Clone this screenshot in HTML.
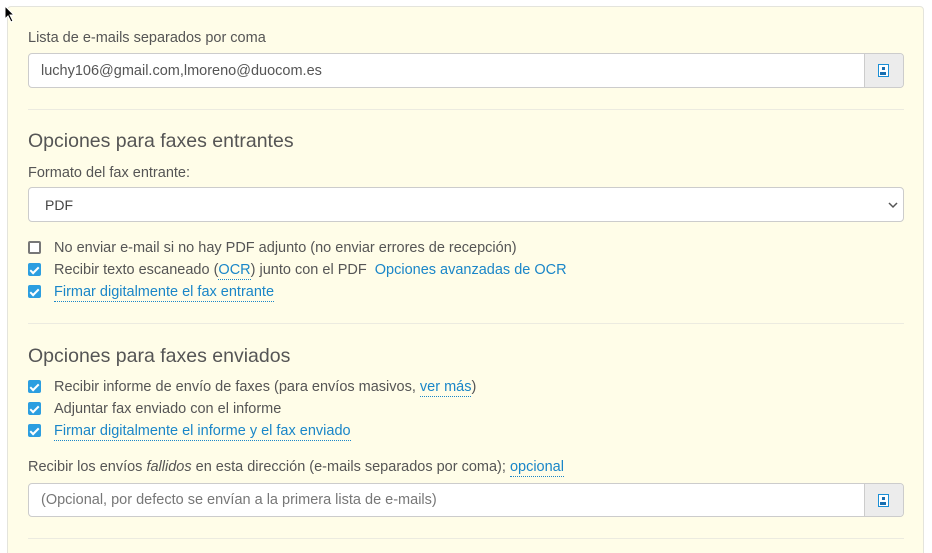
<!DOCTYPE html>
<html><head><meta charset="utf-8"><style>
*{box-sizing:border-box;margin:0;padding:0}
html,body{width:932px;height:553px;overflow:hidden}
body{background:#fff;font-family:"Liberation Sans",sans-serif;color:#555;position:relative}
.panel{position:absolute;left:7px;top:6px;width:917px;height:560px;background:#fffde8;border:1px solid #e4e4dc;border-radius:4px}
.a{position:absolute;font-size:14.5px;white-space:nowrap}
.h{position:absolute;font-size:19.5px;color:#555;white-space:nowrap}
.in{position:absolute;left:28px;width:876px;background:#fff;border:1px solid #ccc;border-radius:4px;font-size:14.5px;padding-left:12px;display:flex;align-items:center}
.btn{position:absolute;right:0;top:0;bottom:0;width:39px;background:#ececec;border-left:1px solid #ccc;border-radius:0 3px 3px 0}
.ico{position:absolute;left:13px;top:10px;width:11px;height:13px;border:1.5px solid #1a8fd6;background:#fff}
.ico:before{content:"";position:absolute;left:3px;top:2px;width:3px;height:3px;background:#1a6fb0}
.ico:after{content:"";position:absolute;left:1px;bottom:1px;width:6px;height:3px;background:#1a6fb0}
.hr{position:absolute;left:28px;width:876px;height:1px;background:#ecebe0}
.cb{position:absolute;left:28px;width:13px;height:13px;border-radius:2px;background:#2c9ee0}
.cb.off{background:#fff;border:2px solid #777}
.cb:not(.off):after{content:"";position:absolute;left:4px;top:1.5px;width:3px;height:7px;border:solid #fff;border-width:0 2px 2px 0;transform:rotate(45deg)}
.lk{color:#1a86c8}
.dl{color:#1a86c8;border-bottom:1px dotted #1a86c8;padding-bottom:1px}
</style></head><body>
<div class="panel"></div>
<svg style="position:absolute;left:4px;top:5px" width="12" height="18"><path d="M1 1 L1 14 L4 11 L7 17 L9 16 L6 10 L10 10 Z" fill="#000" stroke="#fff" stroke-width="1"/></svg>
<div class="a" style="left:28px;top:30px">Lista de e-mails separados por coma</div>
<div class="in" style="top:53px;height:35px;color:#555">luchy106@gmail.com,lmoreno@duocom.es<div class="btn"><div class="ico"></div></div></div>
<div class="hr" style="top:109px"></div>
<div class="h" style="left:28px;top:130px">Opciones para faxes entrantes</div>
<div class="a" style="left:28px;top:165px">Formato del fax entrante:</div>
<div class="in" style="top:187px;height:35px;color:#444;padding-left:16px;font-size:14px">PDF
<svg style="position:absolute;right:5px;top:13px" width="10" height="8"><path d="M1 2 L5 6 L9 2" fill="none" stroke="#555" stroke-width="1.5"/></svg></div>
<div class="cb off" style="top:241px"></div><div class="a" style="left:54px;top:240px">No enviar e-mail si no hay PDF adjunto (no enviar errores de recepción)</div>
<div class="cb" style="top:263px"></div><div class="a" style="left:54px;top:262px">Recibir texto escaneado (<span class="dl">OCR</span>) junto con el PDF &nbsp;<span class="lk">Opciones avanzadas de OCR</span></div>
<div class="cb" style="top:285px"></div><div class="a" style="left:54px;top:284px"><span class="dl">Firmar digitalmente el fax entrante</span></div>
<div class="hr" style="top:323px"></div>
<div class="h" style="left:28px;top:345px">Opciones para faxes enviados</div>
<div class="cb" style="top:380px"></div><div class="a" style="left:54px;top:379px">Recibir informe de envío de faxes (para envíos masivos, <span class="dl">ver más</span>)</div>
<div class="cb" style="top:402px"></div><div class="a" style="left:54px;top:401px">Adjuntar fax enviado con el informe</div>
<div class="cb" style="top:424px"></div><div class="a" style="left:54px;top:423px"><span class="dl">Firmar digitalmente el informe y el fax enviado</span></div>
<div class="a" style="left:28px;top:459px">Recibir los envíos <i>fallidos</i> en esta dirección (e-mails separados por coma); <span class="dl">opcional</span></div>
<div class="in" style="top:483px;height:34px;color:#777">(Opcional, por defecto se envían a la primera lista de e-mails)<div class="btn"><div class="ico"></div></div></div>
<div class="hr" style="top:538px"></div>
</body></html>
